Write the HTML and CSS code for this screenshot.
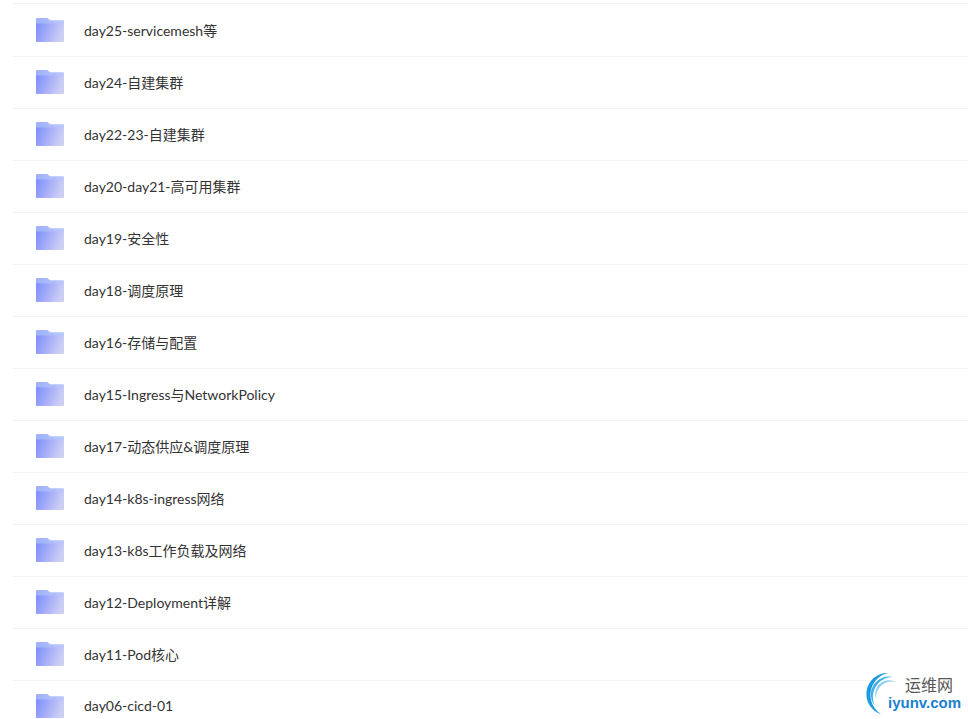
FILE: index.html
```html
<!DOCTYPE html>
<html lang="en">

<head>
  <meta charset="UTF-8">
  <title>Files</title>
  <link rel="stylesheet" href="styles.css">
</head>

<body>
  <svg class="defs" width="0" height="0">
    <defs>
      <linearGradient id="folder-body" x1="0" y1="0" x2="1" y2="0.25">
        <stop offset="0" stop-color="#7d8dfd" />
        <stop offset="1" stop-color="#cdcef4" />
      </linearGradient>
      <linearGradient id="folder-back" x1="0" y1="0" x2="1" y2="0">
        <stop offset="0" stop-color="#9cb0fd" />
        <stop offset="1" stop-color="#bcc8fb" />
      </linearGradient>
      <symbol id="folder" viewBox="0 0 28 24">
        <path d="M1 0H11.500L14 2.200H27A1 1 0 0 1 28 3.200V8H0V1A1 1 0 0 1 1 0Z" fill="url(#folder-back)" />
        <path d="M0 5.500H28V23A1 1 0 0 1 27 24H1A1 1 0 0 1 0 23Z" fill="url(#folder-body)" />
      </symbol>
    </defs>
  </svg>

  <ul class="file-list">
    <li class="file-row"><svg class="folder"><use href="#folder" /></svg><span>day25-servicemesh等</span></li>
    <li class="file-row"><svg class="folder"><use href="#folder" /></svg><span>day24-自建集群</span></li>
    <li class="file-row"><svg class="folder"><use href="#folder" /></svg><span>day22-23-自建集群</span></li>
    <li class="file-row"><svg class="folder"><use href="#folder" /></svg><span>day20-day21-高可用集群</span></li>
    <li class="file-row"><svg class="folder"><use href="#folder" /></svg><span>day19-安全性</span></li>
    <li class="file-row"><svg class="folder"><use href="#folder" /></svg><span>day18-调度原理</span></li>
    <li class="file-row"><svg class="folder"><use href="#folder" /></svg><span>day16-存储与配置</span></li>
    <li class="file-row"><svg class="folder"><use href="#folder" /></svg><span>day15-Ingress与NetworkPolicy</span></li>
    <li class="file-row"><svg class="folder"><use href="#folder" /></svg><span>day17-动态供应&amp;调度原理</span></li>
    <li class="file-row"><svg class="folder"><use href="#folder" /></svg><span>day14-k8s-ingress网络</span></li>
    <li class="file-row"><svg class="folder"><use href="#folder" /></svg><span>day13-k8s工作负载及网络</span></li>
    <li class="file-row"><svg class="folder"><use href="#folder" /></svg><span>day12-Deployment详解</span></li>
    <li class="file-row"><svg class="folder"><use href="#folder" /></svg><span>day11-Pod核心</span></li>
    <li class="file-row"><svg class="folder"><use href="#folder" /></svg><span>day06-cicd-01</span></li>
  </ul>

  <div class="watermark">
    <svg class="watermark-logo" viewBox="0 0 44 44">
      <path d="M26 1A21 21 0 0 0 19 42A22.500 22.500 0 0 1 26 1Z" fill="#1a9be0" />
      <path d="M31 5A18 18 0 0 0 13 34A20 20 0 0 1 31 5Z" fill="#3fafe8" />
      <path d="M34 10A14 14 0 0 0 14 27A16 16 0 0 1 34 10Z" fill="#8fd0f2" />
    </svg>
    <div class="watermark-cn">运维网</div>
    <div class="watermark-en">iyunv.com</div>
  </div>
</body>

</html>
```

FILE: styles.css
```css
* {
  box-sizing: border-box;
}

html {
  font-family: Lato, "Noto Sans CJK SC", sans-serif;
  background: #fff;
  color: #333;
}

body {
  margin: 0;
  height: 719px;
  overflow: hidden;
  position: relative;
}

.defs {
  position: absolute;
}

.file-list {
  list-style: none;
  margin: 3px 0 0 13px;
  padding: 1px 0 0;
  border-top: 1px solid #f3f3f3;
}

.file-row {
  height: 52px;
  display: flex;
  align-items: center;
  gap: 20px;
  padding-left: 23px;
  border-bottom: 1px solid #f3f3f3;
  font-size: 14px;
}

.file-row span {
  margin-top: -2px;
}

.folder {
  width: 28px;
  height: 24px;
  flex: none;
  margin-top: -1px;
}

.watermark {
  position: absolute;
  left: 866px;
  top: 672px;
  width: 102px;
  height: 47px;
  background: #fff;
}

.watermark-logo {
  position: absolute;
  left: -4px;
  top: 0;
  width: 44px;
  height: 44px;
}

.watermark-cn {
  position: absolute;
  left: 39px;
  top: 3px;
  font-size: 16px;
  line-height: 20px;
  color: #555;
}

.watermark-en {
  position: absolute;
  left: 22px;
  top: 21px;
  font-family: "Liberation Sans", sans-serif;
  font-size: 15px;
  line-height: 20px;
  font-weight: 700;
  color: #1a80d0;
}
```
